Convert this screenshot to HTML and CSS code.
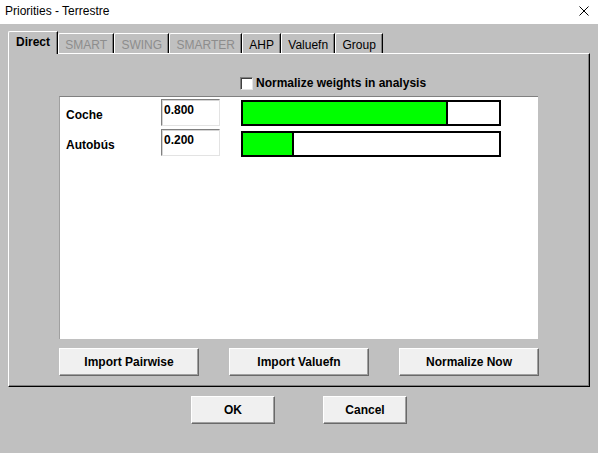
FILE: index.html
```html
<!DOCTYPE html>
<html>
<head>
<meta charset="utf-8">
<link rel="stylesheet" href="styles.css">
</head>
<body>
<div class="window">
  <div class="titlebar">
    <span class="title">Priorities - Terrestre</span>
    <svg class="close" width="10" height="10" viewBox="0 0 10 10"><path d="M0.5 0.5L9.5 9.5M9.5 0.5L0.5 9.5" stroke="#000" stroke-width="1"/></svg>
  </div>
  <div class="client">
    <div class="tabs">
      <div class="tab selected">Direct</div>
      <div class="tab disabled">SMART</div>
      <div class="tab disabled">SWING</div>
      <div class="tab disabled">SMARTER</div>
      <div class="tab">AHP</div>
      <div class="tab">Valuefn</div>
      <div class="tab">Group</div>
    </div>
    <div class="panel">
      <div class="check-row">
        <span class="checkbox"></span>
        <span class="check-label">Normalize weights in analysis</span>
      </div>
      <div class="list">
        <div class="labels">
          <div class="label">Coche</div>
          <div class="label">Autobús</div>
        </div>
        <div class="fields">
          <div class="field">0.800</div>
          <div class="field">0.200</div>
        </div>
        <div class="bars">
          <div class="bar"><div class="fill" style="width:80%"></div></div>
          <div class="bar"><div class="fill" style="width:20%"></div></div>
        </div>
      </div>
      <div class="panel-buttons">
        <div class="btn wide">Import Pairwise</div>
        <div class="btn wide">Import Valuefn</div>
        <div class="btn wide">Normalize Now</div>
      </div>
    </div>
    <div class="dialog-buttons">
      <div class="btn small">OK</div>
      <div class="btn small">Cancel</div>
    </div>
  </div>
</div>
</body>
</html>
```

FILE: styles.css
```css
* { box-sizing: border-box; }
html, body { margin: 0; padding: 0; }
body {
  width: 598px;
  height: 453px;
  background: #c0c0c0;
  font-family: "Liberation Sans", Arial, sans-serif;
  font-size: 12px;
  color: #000;
  overflow: hidden;
}
.window { width: 598px; height: 453px; display: flex; flex-direction: column; }
.titlebar {
  height: 24px;
  background: #fff;
  display: flex;
  align-items: center;
  justify-content: space-between;
  padding: 0 9px 0 5px;
  flex-shrink: 0;
}
.title {
  font-family: "Liberation Sans", Arial, sans-serif;
  font-size: 12px;
  color: #000;
  position: relative;
  top: -1px;
}
.close { display: block; margin-top: -2px; }

.client { padding: 7px 0 0 8px; display: flex; flex-direction: column; }

.tabs { display: flex; align-items: flex-end; height: 22px; }
.tab {
  height: 20px;
  padding: 4px 6.2px 0 6.2px;
  border-top: 1px solid #fff;
  border-left: 1px solid #fff;
  border-right: 1px solid #000;
  box-shadow: inset -1px 0 0 #808080;
  border-top-left-radius: 2px;
  line-height: 14px;
  white-space: nowrap;
}
.tab.disabled { color: #8d8d8d; }
.tab.selected {
  height: 23px;
  margin-bottom: -1px;
  padding: 3px 7px 0 7px;
  font-weight: bold;
  background: #c0c0c0;
  position: relative;
  z-index: 1;
}

.panel {
  width: 582px;
  height: 334px;
  border-top: 1px solid #fff;
  border-left: 1px solid #fff;
  border-right: 1px solid #000;
  border-bottom: 1px solid #000;
  box-shadow: inset -1px -1px 0 #808080;
  display: flex;
  flex-direction: column;
}
.check-row {
  margin: 23px 0 0 231px;
  height: 13px;
  display: flex;
  align-items: center;
  gap: 3px;
}
.checkbox {
  width: 13px;
  height: 13px;
  background: #fff;
  border-top: 1px solid #808080;
  border-left: 1px solid #808080;
  border-right: 1px solid #e3e3e3;
  border-bottom: 1px solid #e3e3e3;
  box-shadow: inset 1px 1px 0 #404040;
}
.check-label { font-weight: bold; line-height: 14px; margin-top: -1px; }

.list {
  margin: 6px 0 0 50px;
  width: 479px;
  height: 243px;
  background: #fff;
  border-top: 1px solid #808080;
  border-left: 1px solid #a0a0a0;
  padding: 2px 0 0 6px;
  display: flex;
  align-items: flex-start;
}
.labels { width: 95px; padding-top: 1px; }
.label { font-weight: bold; line-height: 30px; }
.fields { display: flex; flex-direction: column; gap: 3px; }
.field {
  width: 59px;
  height: 27px;
  background: #fff;
  border-top: 1px solid #808080;
  border-left: 1px solid #808080;
  border-right: 1px solid #e3e3e3;
  border-bottom: 1px solid #e3e3e3;
  box-shadow: inset 1px 1px 0 #d4d4d4;
  padding: 3px 0 0 2px;
  font-weight: bold;
  line-height: 14px;
}
.bars { margin: 1px 0 0 21px; display: flex; flex-direction: column; gap: 5px; }
.bar {
  width: 260px;
  height: 26px;
  border: 2px solid #000;
  background: #fff;
}
.fill {
  height: 100%;
  background: #00ff00;
  border-right: 2px solid #000;
}

.panel-buttons {
  margin: 9px 0 0 50px;
  display: flex;
  gap: 30px;
}
.btn {
  height: 28px;
  background: #f0f0f0;
  border-top: 1px solid #fff;
  border-left: 1px solid #fff;
  border-right: 1px solid #696969;
  border-bottom: 1px solid #696969;
  box-shadow: inset -1px -1px 0 #a0a0a0;
  display: flex;
  align-items: center;
  justify-content: center;
  font-weight: bold;
  line-height: 14px;
}
.btn.wide { width: 140px; }
.btn.small { width: 84px; }

.dialog-buttons {
  margin: 9px 0 0 0;
  width: 582px;
  display: flex;
  justify-content: center;
  gap: 48px;
}
```
